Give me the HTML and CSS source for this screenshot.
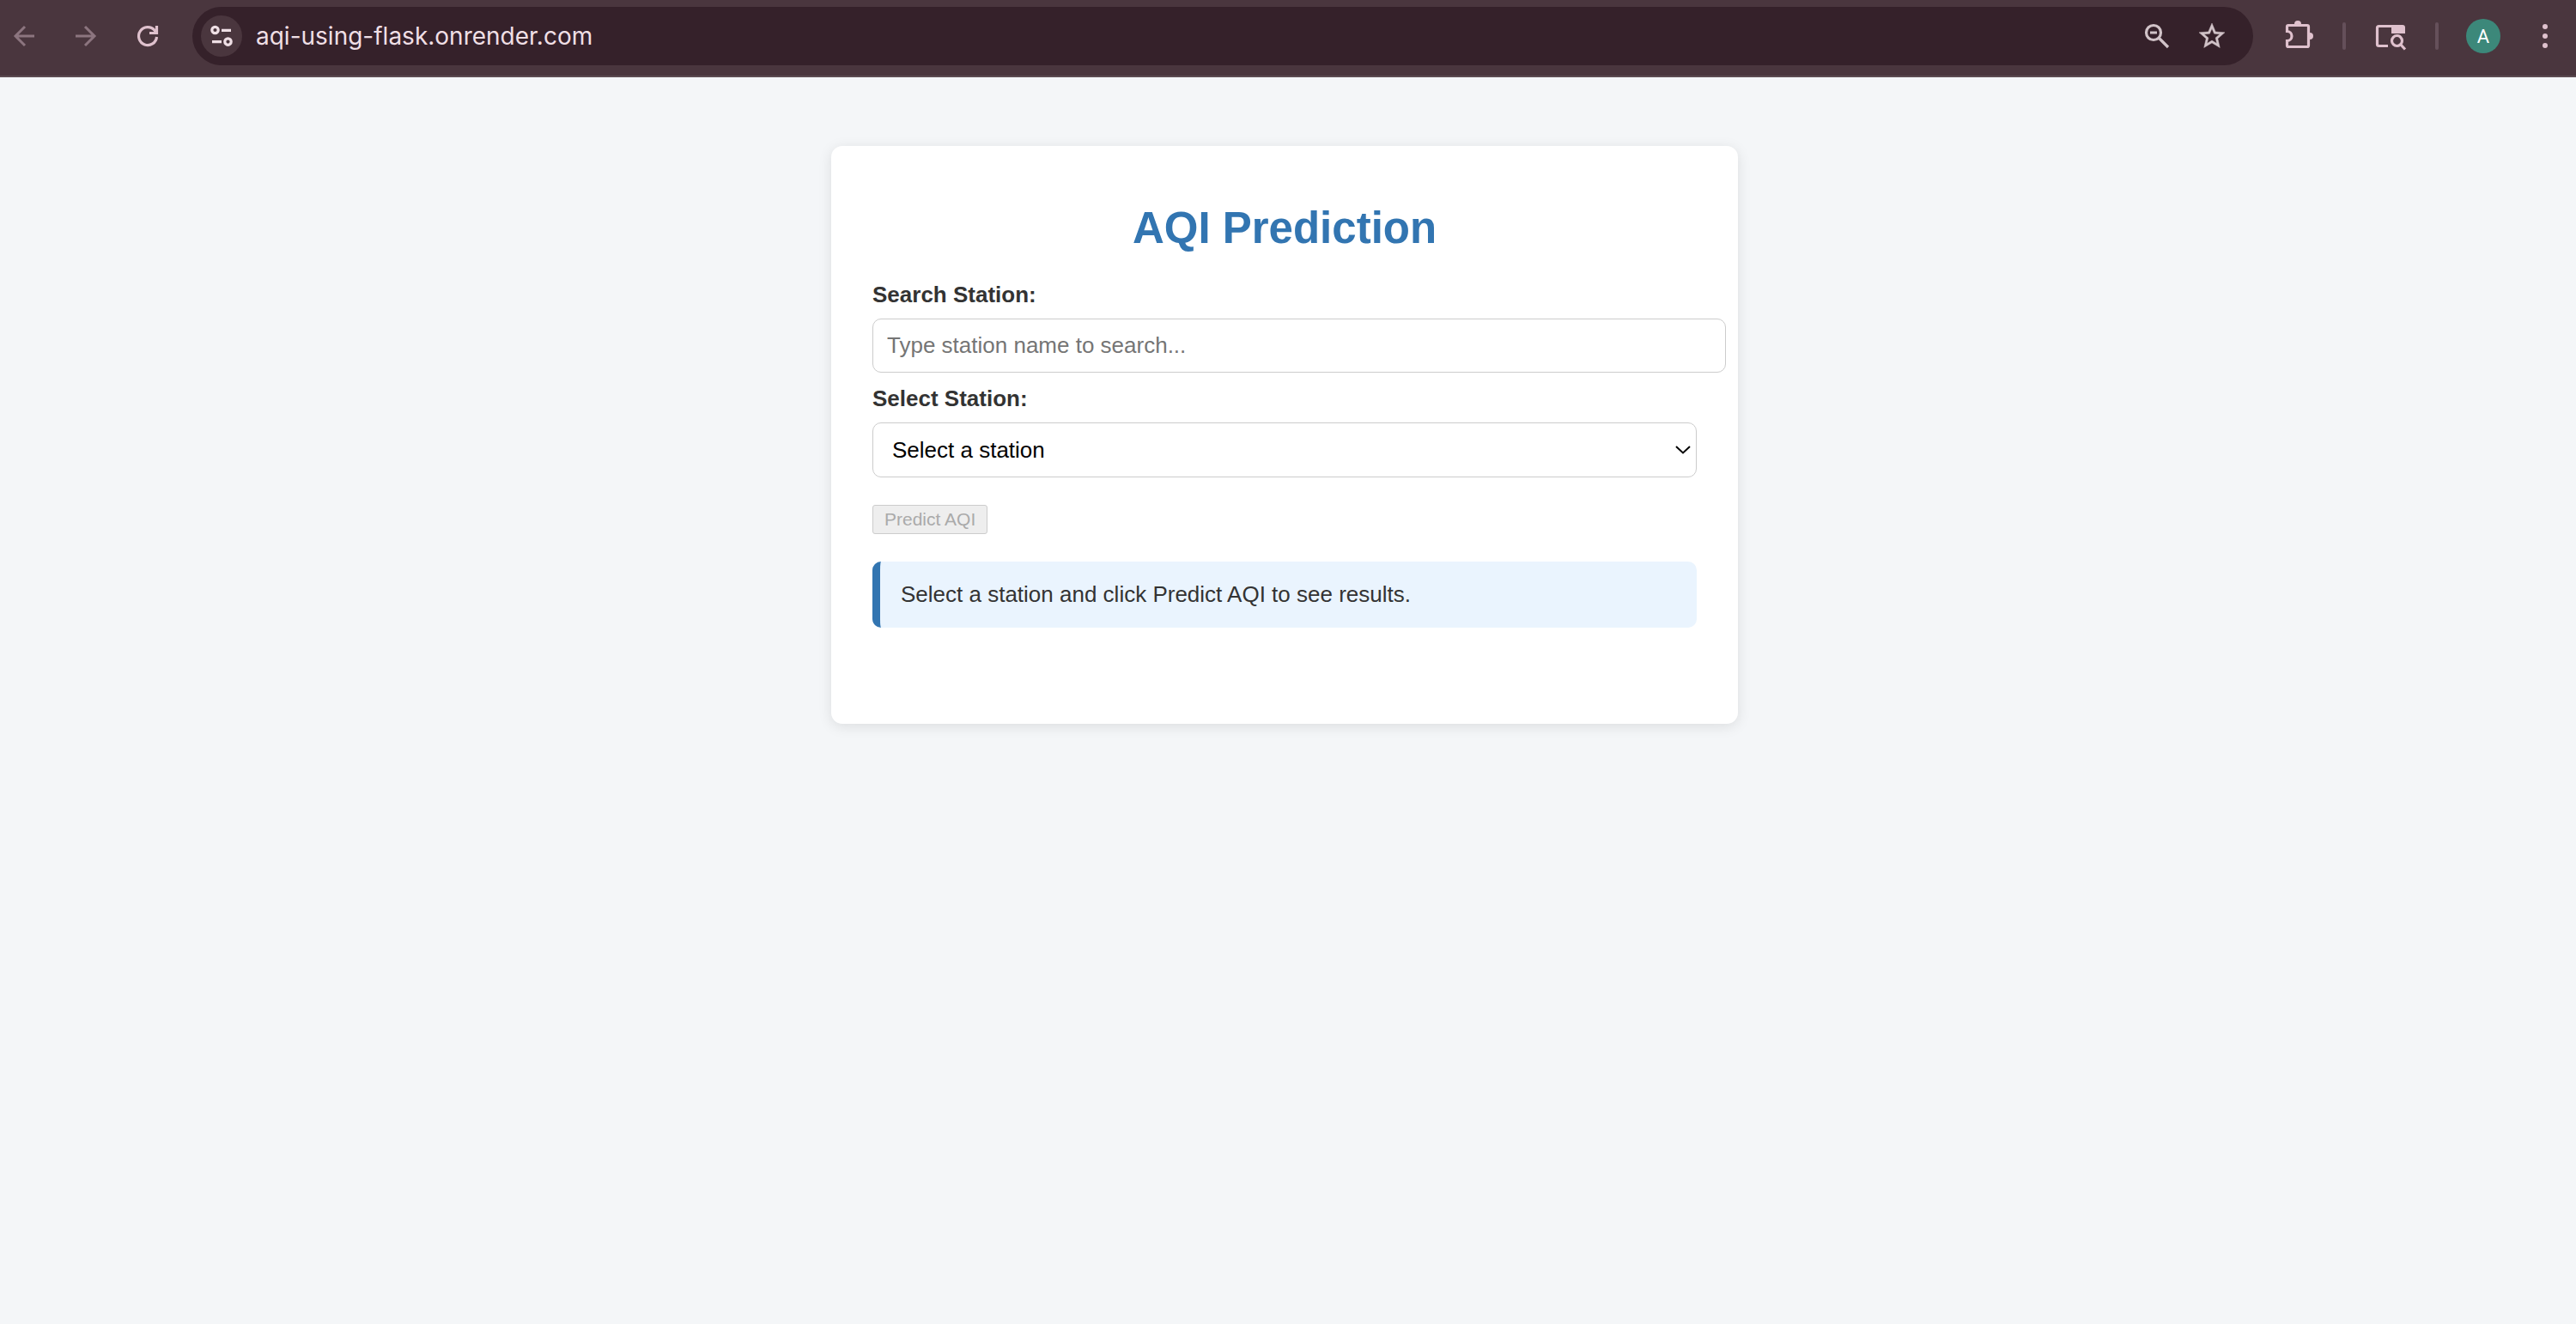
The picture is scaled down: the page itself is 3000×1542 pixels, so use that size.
FILE: index.html
```html
<!DOCTYPE html>
<html lang="en">
<head>
<meta charset="utf-8">
<meta name="viewport" content="width=device-width, initial-scale=1">
<title>AQI Prediction</title>
<link rel="stylesheet" href="styles.css">
</head>
<body>
<header class="browser-bar">
  <nav class="nav-buttons" aria-label="Browser navigation">
    <button class="icon-button dim" type="button" aria-label="Back">
      <svg viewBox="0 0 56 56" class="line"><path d="M40 28H18M29 17 18 28l11 11"/></svg>
    </button>
    <button class="icon-button dim" type="button" aria-label="Forward">
      <svg viewBox="0 0 56 56" class="line"><path d="M16 28h22M27 17l11 11-11 11"/></svg>
    </button>
    <button class="icon-button" type="button" aria-label="Reload">
      <svg viewBox="0 0 56 56" class="line thick"><path d="M38.5 29A10.5 10.5 0 1 1 36 21.200L38.500 24.500M38.500 16v8.500H30"/></svg>
    </button>
  </nav>
  <div class="omnibox">
    <button class="site-info" type="button" aria-label="Site information">
      <svg viewBox="0 0 48 48" class="line thick"><circle cx="16.5" cy="17" r="3.7"/><path d="M24 17.3h11M13 30.6h11"/><circle cx="31.5" cy="30.6" r="3.7"/></svg>
    </button>
    <input class="address" type="text" value="aqi-using-flask.onrender.com" aria-label="Address">
    <button class="icon-button pale" type="button" aria-label="Zoom">
      <svg viewBox="0 0 56 56" class="line thick"><circle cx="24" cy="24" r="8.5"/><path d="M20 24h8M30 30 41 41"/></svg>
    </button>
    <button class="icon-button pale" type="button" aria-label="Bookmark this page">
      <svg viewBox="0 0 24 24" class="star"><path d="M22 9.240l-7.190-.620L12 2 9.190 8.630 2 9.240l5.460 4.730L5.820 21 12 17.270 18.180 21l-1.630-7.030L22 9.240zM12 15.400l-3.760 2.270 1-4.280-3.320-2.880 4.380-.380L12 6.100l1.710 4.040 4.380.380-3.320 2.880 1 4.280L12 15.400z"/></svg>
    </button>
  </div>
  <div class="tools">
    <button class="icon-button" type="button" aria-label="Extensions">
      <svg viewBox="0 0 56 56" class="line thick"><path d="M15.500 22.500V17q0-1.500 1.500-1.500h22q1.500 0 1.500 1.500v22q0 1.500-1.500 1.500H17q-1.500 0-1.500-1.500v-5.500a5 5 0 0 0 0-11z"/><path class="solid" d="M24 14.500v-.500a4 4 0 0 1 8 0v.500zM41.500 24h.500a4 4 0 0 1 0 8h-.500z"/></svg>
    </button>
    <span class="divider"></span>
    <button class="icon-button" type="button" aria-label="Search tabs">
      <svg viewBox="0 0 56 56" class="line thick"><path d="M25 39.500H14.500q-2 0-2-2v-19q0-2 2-2h27"/><path class="solid" d="M29 15h13q3 0 3 3v7H29z"/><circle cx="35.500" cy="33.500" r="6"/><path d="M39.500 37.500l5.500 6"/></svg>
    </button>
    <span class="divider"></span>
    <button class="avatar" type="button" aria-label="Profile">A</button>
    <button class="icon-button" type="button" aria-label="Menu">
      <svg viewBox="0 0 56 56"><circle cx="28" cy="17" r="3"/><circle cx="28" cy="28" r="3"/><circle cx="28" cy="39" r="3"/></svg>
    </button>
  </div>
</header>
<main class="page">
  <section class="card">
    <h1 class="title">AQI Prediction</h1>
    <label class="label" for="search">Search Station:</label>
    <input class="search" id="search" type="text" placeholder="Type station name to search...">
    <label class="label" for="station">Select Station:</label>
    <div class="select-wrap">
      <select class="select" id="station"><option>Select a station</option></select>
      <svg class="chevron" viewBox="0 0 18 10" aria-hidden="true"><path d="M1 1l8 7.500 8-7.500"/></svg>
    </div>
    <button class="predict" type="button" disabled>Predict AQI</button>
    <div class="result">Select a station and click Predict AQI to see results.</div>
  </section>
</main>
</body>
</html>
```

FILE: styles.css
```css
* {
  box-sizing: border-box;
}

body {
  margin: 0;
  min-height: 100vh;
  background: #f4f6f8;
  color: #333;
  font-family: "Liberation Sans", Arial, sans-serif;
  font-size: 26px;
  line-height: 29px;
}

button,
input,
select {
  margin: 0;
  font-family: inherit;
}

/* Browser bar */
.browser-bar {
  display: flex;
  align-items: center;
  gap: 24px;
  padding: 8px 8px 12px 0;
  background: #4a363e;
  border-bottom: 2px solid #5b4a51;
}

.nav-buttons {
  display: flex;
  gap: 16px;
}

.icon-button {
  display: flex;
  align-items: center;
  justify-content: center;
  width: 56px;
  height: 56px;
  padding: 0;
  border: 0;
  background: none;
  color: #dfc1cd;
}

.icon-button svg,
.site-info svg {
  display: block;
  width: 100%;
  height: 100%;
  fill: currentColor;
}

.icon-button.dim {
  color: #8c757f;
}

.icon-button.pale {
  color: #d1c3c8;
}

.icon-button .star {
  width: 36px;
  height: 36px;
  stroke: currentColor;
  stroke-width: 0.3;
}

.icon-button .line,
.site-info .line {
  fill: none;
  stroke: currentColor;
  stroke-width: 3;
}

.icon-button .thick,
.site-info .thick {
  stroke-width: 3.2;
}

.icon-button .line .solid {
  fill: currentColor;
  stroke: none;
}

.omnibox {
  display: flex;
  flex: 1;
  align-items: center;
  gap: 8px;
  height: 68px;
  padding: 0 20px 0 10px;
  border-radius: 34px;
  background: #35212a;
}

.site-info {
  width: 48px;
  height: 48px;
  padding: 0;
  border: 0;
  border-radius: 50%;
  background: #4a363e;
  color: #efdfe5;
}

.address {
  flex: 1;
  min-width: 0;
  padding: 0 0 0 8px;
  border: 0;
  background: none;
  color: #efdfe5;
  font-family: Inter, sans-serif;
  font-size: 28px;
}

.tools {
  display: flex;
  align-items: center;
  gap: 24px;
}

.divider {
  width: 4px;
  height: 32px;
  border-radius: 2px;
  background: #65505a;
}

.avatar {
  width: 40px;
  height: 40px;
  margin-left: 8px;
  padding: 0;
  border: 0;
  border-radius: 50%;
  background: #3c887a;
  color: #fff;
  font-family: Roboto, sans-serif;
  font-size: 22px;
}

/* Prediction card */
.page {
  padding: 80px 8px 80px 0;
}

.card {
  max-width: 1056px;
  margin: 0 auto;
  padding: 32px 48px 112px;
  border-radius: 13px;
  background: #fff;
  box-shadow: 0 3px 16px rgba(0, 0, 0, 0.1);
}

.title {
  margin: 34px 0;
  color: #3275b1;
  font-size: 51px;
  line-height: 59px;
  text-align: center;
}

.label {
  display: block;
  margin-bottom: 13px;
  font-weight: bold;
}

.search {
  box-sizing: content-box;
  display: block;
  width: 100%;
  height: 29px;
  margin-bottom: 16px;
  padding: 16px;
  border: 1px solid #ccc;
  border-radius: 10px;
  background: #fff;
  font-size: 26px;
}

.search::placeholder {
  color: #757575;
}

.select-wrap {
  display: grid;
  align-items: center;
}

.select {
  grid-area: 1 / 1;
  width: 100%;
  height: 64px;
  padding: 0 48px 0 22px;
  border: 1px solid #ccc;
  border-radius: 10px;
  appearance: none;
  background: #fff;
  color: #000;
  font-size: 26px;
}

.chevron {
  grid-area: 1 / 1;
  justify-self: end;
  width: 18px;
  height: 10px;
  margin-right: 7px;
  fill: none;
  stroke: #000;
  stroke-width: 2;
  pointer-events: none;
}

.predict {
  display: block;
  height: 34px;
  margin: 32px 0;
  padding: 0 13px;
  border: 1px solid #ccc;
  border-radius: 3px;
  background: #eee;
  color: #aaa;
  font-size: 21px;
}

.result {
  padding: 24px;
  border-left: 9px solid #3275b1;
  border-radius: 10px;
  background: #eaf4fe;
}
```
